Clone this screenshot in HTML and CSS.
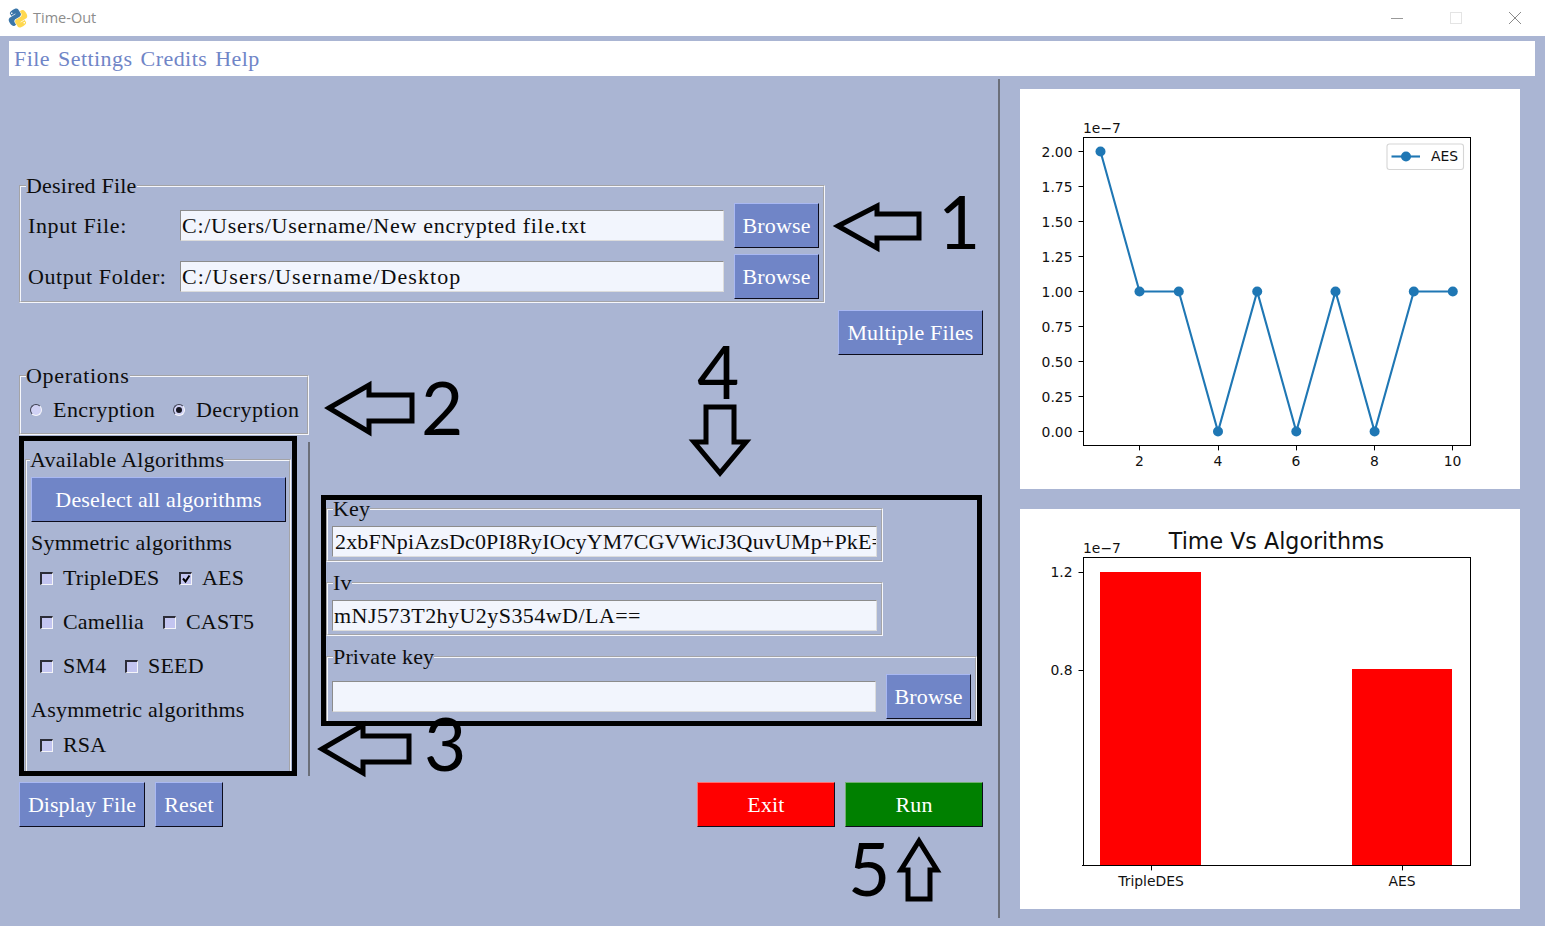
FILE: index.html
```html
<!DOCTYPE html>
<html lang="en">
<head>
<meta charset="utf-8">
<title>Time-Out</title>
<link rel="stylesheet" href="styles.css">
</head>
<body>
<header class="titlebar">
  <svg class="app-icon" viewBox="-8 -8 126 126" aria-hidden="true">
    <g transform="rotate(-32 55 55)">
      <path fill="#3b76a9" d="M54.900 0C26.800 0 28.600 12.200 28.600 12.200v12.600h26.800v3.800H17.900S0 26.600 0 54.900s15.700 27.300 15.700 27.300h9.400V69s-.5-15.700 15.400-15.700h26.600s14.900.2 14.900-14.400V14.600S84.300 0 54.900 0z"/>
      <path fill="#ffd84f" d="M55.100 110c28.100 0 26.300-12.200 26.300-12.200V85.200H54.600v-3.800h37.500S110 83.400 110 55.100s-15.700-27.300-15.700-27.300h-9.400V41s.5 15.700-15.400 15.700H42.900S28 56.500 28 71.100v24.300S25.700 110 55.100 110z"/>
      <circle cx="39" cy="13" r="4.500" fill="#fff"/>
      <circle cx="71" cy="97" r="4.500" fill="#fff"/>
    </g>
  </svg>
  <span class="app-title">Time-Out</span>
  <div class="window-controls">
    <span class="win-min"></span>
    <span class="win-max"></span>
    <svg class="win-close" viewBox="0 0 12 12" aria-hidden="true"><path d="M0 0L12 12M12 0L0 12"/></svg>
  </div>
</header>

<nav class="menubar">
  <span>File</span><span>Settings</span><span>Credits</span><span>Help</span>
</nav>

<main class="workspace">
  <section class="left">
    <fieldset class="frame desired">
      <legend>Desired File</legend>
      <div class="file-row">
        <span class="file-label">Input File:</span>
        <div class="entry entry-file">C:/Users/Username/New encrypted file.txt</div>
        <button class="btn btn-browse">Browse</button>
      </div>
      <div class="file-row">
        <span class="file-label">Output Folder:</span>
        <div class="entry entry-file entry-folder">C:/Users/Username/Desktop</div>
        <button class="btn btn-browse">Browse</button>
      </div>
    </fieldset>

    <button class="btn btn-multiple">Multiple Files</button>

    <div class="lower">
      <div class="col-algos">
        <fieldset class="frame operations">
          <legend>Operations</legend>
          <div class="radio-row">
            <label class="radio-item"><span class="radio"></span>Encryption</label>
            <label class="radio-item"><span class="radio radio-on"></span>Decryption</label>
          </div>
        </fieldset>

        <div class="algo-row">
          <div class="highlight algo-box">
            <fieldset class="frame algos">
              <legend>Available Algorithms</legend>
              <button class="btn btn-deselect">Deselect all algorithms</button>
              <div class="algo-heading">Symmetric algorithms</div>
              <div class="check-row">
                <label class="check-item check-wide"><span class="check"></span>TripleDES</label>
                <label class="check-item"><span class="check check-on"><svg viewBox="0 0 10 10" aria-hidden="true"><path d="M2 4.500L4.500 7.500L8.500 1.500"/></svg></span>AES</label>
              </div>
              <div class="check-row">
                <label class="check-item check-mid"><span class="check"></span>Camellia</label>
                <label class="check-item"><span class="check"></span>CAST5</label>
              </div>
              <div class="check-row">
                <label class="check-item check-narrow"><span class="check"></span>SM4</label>
                <label class="check-item"><span class="check"></span>SEED</label>
              </div>
              <div class="algo-heading algo-heading-asym">Asymmetric algorithms</div>
              <div class="check-row check-row-rsa">
                <label class="check-item"><span class="check"></span>RSA</label>
              </div>
            </fieldset>
          </div>
          <div class="v-sep"></div>
        </div>

        <div class="action-row">
          <button class="btn btn-display">Display File</button>
          <button class="btn btn-reset">Reset</button>
        </div>
      </div>

      <div class="col-keys">
        <div class="highlight key-box">
          <fieldset class="frame key-frame">
            <legend>Key</legend>
            <div class="entry entry-key">2xbFNpiAzsDc0PI8RyIOcyYM7CGVWicJ3QuvUMp+PkE=</div>
          </fieldset>
          <fieldset class="frame key-frame iv-frame">
            <legend>Iv</legend>
            <div class="entry entry-iv">mNJ573T2hyU2yS354wD/LA==</div>
          </fieldset>
          <fieldset class="frame key-frame private-frame">
            <legend>Private key</legend>
            <div class="private-row">
              <div class="entry entry-private"></div>
              <button class="btn btn-browse">Browse</button>
            </div>
          </fieldset>
        </div>
        <div class="run-row">
          <button class="btn btn-run btn-exit">Exit</button>
          <button class="btn btn-run btn-go">Run</button>
        </div>
      </div>
    </div>
  </section>

  <div class="divider"></div>

  <aside class="charts">
    <svg class="chart" viewBox="0 0 500 400" role="img" aria-label="AES timing line chart">
      <rect class="spine" x="63.500" y="48.500" width="387" height="308"/>
      <g class="tick">
        <path d="M58.500 62.500H63.500M58.500 97.500H63.500M58.500 132.500H63.500M58.500 167.500H63.500M58.500 202.500H63.500M58.500 237.500H63.500M58.500 272.500H63.500M58.500 307.500H63.500M58.500 342.500H63.500"/>
        <path d="M119.500 356.500v4.900M198.500 356.500v4.900M276.500 356.500v4.900M354.500 356.500v4.900M432.500 356.500v4.900"/>
      </g>
      <text class="t-end" x="52.500" y="68">2.00</text>
      <text class="t-end" x="52.500" y="103">1.75</text>
      <text class="t-end" x="52.500" y="138">1.50</text>
      <text class="t-end" x="52.500" y="173">1.25</text>
      <text class="t-end" x="52.500" y="208">1.00</text>
      <text class="t-end" x="52.500" y="243">0.75</text>
      <text class="t-end" x="52.500" y="278">0.50</text>
      <text class="t-end" x="52.500" y="313">0.25</text>
      <text class="t-end" x="52.500" y="348">0.00</text>
      <text class="t-mid" x="119.500" y="377">2</text>
      <text class="t-mid" x="198" y="377">4</text>
      <text class="t-mid" x="276" y="377">6</text>
      <text class="t-mid" x="354.500" y="377">8</text>
      <text class="t-mid" x="432.500" y="377">10</text>
      <text x="63" y="44">1e−7</text>
      <polyline class="series" points="80.500,62.500 119.500,202.500 158.800,202.500 198,342.500 237.200,202.500 276.300,342.500 315.500,202.500 354.600,342.500 393.800,202.500 432.800,202.500"/>
      <g class="dot">
        <circle cx="80.500" cy="62.500" r="5"/><circle cx="119.500" cy="202.500" r="5"/><circle cx="158.800" cy="202.500" r="5"/><circle cx="198" cy="342.500" r="5"/><circle cx="237.200" cy="202.500" r="5"/><circle cx="276.300" cy="342.500" r="5"/><circle cx="315.500" cy="202.500" r="5"/><circle cx="354.600" cy="342.500" r="5"/><circle cx="393.800" cy="202.500" r="5"/><circle cx="432.800" cy="202.500" r="5"/>
      </g>
      <rect class="legend-box" x="367" y="55" width="76.500" height="25.500" rx="2.500"/>
      <path class="series" d="M371.500 67.500H400"/>
      <circle class="dot" cx="386" cy="67.500" r="5"/>
      <text x="411" y="72">AES</text>
    </svg>

    <svg class="chart" viewBox="0 0 500 400" role="img" aria-label="Time Vs Algorithms bar chart">
      <rect class="bar" x="80" y="63" width="101" height="293"/>
      <rect class="bar" x="332" y="160" width="100" height="196"/>
      <rect class="spine" x="63.500" y="48.500" width="387" height="308"/>
      <g class="tick">
        <path d="M58.500 63.500H63.500M58.500 161.500H63.500M62 356.500H63.500M131.500 356.500v4.900M382.500 356.500v4.900"/>
      </g>
      <text class="t-end" x="52.500" y="68">1.2</text>
      <text class="t-end" x="52.500" y="166">0.8</text>
      <text class="t-mid" x="131" y="377">TripleDES</text>
      <text class="t-mid" x="382" y="377">AES</text>
      <text x="63" y="44">1e−7</text>
      <text class="chart-title" x="256.500" y="40">Time Vs Algorithms</text>
    </svg>
  </aside>
</main>

<div class="annotations">
  <svg class="arrows" viewBox="0 0 1545 926" aria-hidden="true">
    <path d="M838 226L877 206V214H919V238H877V248Z"/>
    <path d="M329 408L369 385V395H412V421H369V432Z"/>
    <path d="M322 749L363 725V736H409V762H363V773Z"/>
    <path d="M706 407H734V442H746L720 473L694 442H706Z"/>
    <path d="M919 841L937 870H930V899H908V870H901Z"/>
  </svg>
  <span class="digit digit-1">1</span>
  <span class="digit digit-2">2</span>
  <span class="digit digit-3">3</span>
  <span class="digit digit-4">4</span>
  <span class="digit digit-5">5</span>
</div>
</body>
</html>
```

FILE: styles.css
```css
* { box-sizing: border-box; }

html, body { margin: 0; padding: 0; }

body {
  position: relative;
  width: 1545px;
  height: 926px;
  overflow: hidden;
  background: #aab5d3;
  color: #0d0d0d;
  font-family: "Liberation Serif", serif;
  font-size: 22px;
  line-height: 24px;
}

/* Title bar */
.titlebar {
  display: flex;
  align-items: center;
  height: 36px;
  padding-left: 7px;
  background: #fff;
}
.app-icon { width: 22px; height: 22px; flex: none; }
.app-title {
  margin-left: 4px;
  font-family: "Open Sans", sans-serif;
  font-size: 14.500px;
  color: #8c8c8c;
}
.window-controls {
  display: flex;
  align-items: center;
  margin-left: auto;
  padding-right: 24px;
  gap: 47px;
}
.win-min { width: 12px; height: 1px; background: #999; }
.win-max { width: 12px; height: 12px; border: 1px solid #e4e4e4; }
.win-close { width: 12px; height: 12px; }
.win-close path { stroke: #8a8a8a; stroke-width: 1; fill: none; }

/* Menu */
.menubar {
  display: flex;
  gap: 8px;
  height: 35px;
  margin: 5px 10px 0 9px;
  padding: 6px 0 0 5px;
  background: #fff;
  color: #7085c7;
  letter-spacing: 0.45px;
}

/* Layout */
.workspace { display: flex; height: 850px; }
.left {
  display: flex;
  flex-direction: column;
  width: 998px;
  padding: 98px 15px 0 19px;
}
.divider {
  width: 2px;
  margin: 3px 0 8px;
  background: #6b6f7a;
}
.charts {
  display: flex;
  flex-direction: column;
  gap: 20px;
  padding: 13px 0 0 20px;
}
.chart { display: block; width: 500px; height: 400px; background: #fff; }

/* Frames */
.frame {
  min-width: 0;
  margin: 0;
  padding: 0;
  border: 2px groove #f6f7fb;
}
.frame legend {
  padding: 0;
  line-height: 24px;
  letter-spacing: 0.15px;
}

.desired { width: 806px; height: 129px; padding: 5px 4px 0 7px; }
.desired legend { margin-left: -2px; letter-spacing: 0.2px; }
.file-row { display: flex; align-items: center; height: 45px; margin-bottom: 6px; }
.file-label { width: 152px; flex: none; letter-spacing: 0.6px; white-space: nowrap; }
.entry {
  width: 545px;
  height: 31px;
  flex: none;
  padding-left: 1px;
  overflow: hidden;
  white-space: nowrap;
  background: #f2f5fd;
  border: 1px solid;
  border-color: #8c8c8c #dcdcdc #dcdcdc #8c8c8c;
  line-height: 29px;
  letter-spacing: 0.15px;
}
.entry-file { width: 544px; margin-right: 10px; letter-spacing: 0.72px; }
.entry-folder { letter-spacing: 1.11px; }
.entry-key { padding-left: 2px; }
.entry-iv { letter-spacing: 0.45px; }
.entry-private { width: 544px; margin-right: 10px; }

/* Buttons */
.btn {
  display: block;
  flex: none;
  height: 45px;
  padding: 0;
  font: inherit;
  letter-spacing: 0.15px;
  color: #fff;
  background: #7085c7;
  border: 1px solid;
  border-color: #a9b8f2 #0c0c1c #0c0c1c #a9b8f2;
}
.btn-browse { width: 85px; }
.btn-multiple { align-self: flex-end; width: 145px; margin-top: 7px; }
.btn-deselect { width: 255px; }
.btn-display { width: 126px; letter-spacing: 0; }
.btn-reset { width: 68px; }
.btn-run { width: 138px; }
.btn-exit { background: #ff0000; border-color: #ff7070 #0c0c1c #0c0c1c #ff7070; }
.btn-go { background: #008000; border-color: #70b070 #0c0c1c #0c0c1c #70b070; }

/* Lower area */
.lower { display: flex; gap: 11px; }
.col-algos { width: 291px; flex: none; }
.col-keys { width: 662px; flex: none; margin-top: 140px; }

.operations { width: 290px; height: 71px; margin-top: 9px; padding: 10px 0 0 9px; }
.operations legend { margin-left: -4px; letter-spacing: 0.7px; }
.radio-row { display: flex; }
.radio-item { display: flex; align-items: center; flex: none; width: 143px; letter-spacing: 0.45px; }
.radio {
  position: relative;
  width: 12px;
  height: 12px;
  flex: none;
  margin-right: 11px;
  border-radius: 50%;
  background: #d0d1f4;
  border: 1px solid;
  border-color: #3d3f50 #f6f6fa #f6f6fa #3d3f50;
}
.radio-on::after {
  content: "";
  position: absolute;
  top: 2px;
  left: 2px;
  width: 6px;
  height: 6px;
  border-radius: 50%;
  background: #15151f;
}

.highlight { border: 5px solid #000; }
.algo-row { display: flex; margin-top: 1px; }
.algo-box { width: 278px; height: 340px; flex: none; }
.v-sep { width: 2px; margin: 6px 0 0 11px; background: #6b6f7a; }
.algos { height: 323px; margin: 7px 0 0 1px; width: 266px; padding: 5px 0 0 4px; border-bottom: 0; }
.algos legend { margin-left: -1px; letter-spacing: 0.3px; }
.algo-heading { margin-top: 9px; letter-spacing: 0.25px; }
.check-row { display: flex; height: 24px; margin: 11px 0 20px 9px; }
.algo-heading-asym { margin-top: 0; }
.check-row-rsa { margin-top: 11px; margin-bottom: 0; }
.check-item { display: flex; align-items: center; letter-spacing: 0.2px; }
.check-wide { width: 139px; }
.check-mid { width: 123px; }
.check-narrow { width: 85px; }
.check {
  width: 13px;
  height: 13px;
  flex: none;
  margin-right: 10px;
  background: #c3c5f0;
  border-style: solid;
  border-width: 2px 1px 1px 2px;
  border-color: #2c2d38 #f4f4f8 #f4f4f8 #2c2d38;
}
.check svg { display: block; width: 10px; height: 10px; }
.check svg path { fill: none; stroke: #000; stroke-width: 2; }

.action-row { display: flex; gap: 10px; margin-top: 6px; }

.key-box { width: 661px; height: 231px; }
.key-frame { width: 557px; height: 62px; padding: 8px 4px 0 4px; }
.key-frame legend { line-height: 18px; margin-left: 1px; }
.iv-frame { margin-top: 12px; }
.private-frame { width: 651px; height: 73px; margin-top: 12px; border-bottom: 0; }
.private-row { display: flex; align-items: center; }

.run-row { display: flex; justify-content: flex-end; gap: 10px; margin-top: 56px; }

/* Chart text */
.chart text {
  font-family: "DejaVu Sans", sans-serif;
  font-size: 13.900px;
  fill: #111;
}
.chart .t-end { text-anchor: end; }
.chart .t-mid { text-anchor: middle; }
.chart .chart-title { font-size: 22.200px; text-anchor: middle; }
.spine { fill: none; stroke: #000; stroke-width: 1; }
.tick path { fill: none; stroke: #000; stroke-width: 1; }
.series { fill: none; stroke: #1f77b4; stroke-width: 2.100; }
.dot { fill: #1f77b4; }
.legend-box { fill: #fff; stroke: #d6d6d6; stroke-width: 1.100; }
.bar { fill: #ff0000; }

/* Hand-drawn annotations lying over the window */
.annotations { position: absolute; top: 0; left: 0; width: 1545px; height: 926px; pointer-events: none; }
.arrows { position: absolute; top: 0; left: 0; width: 1545px; height: 926px; }
.arrows path { fill: none; stroke: #000; stroke-width: 5; stroke-linejoin: miter; stroke-miterlimit: 6; }
.digit {
  position: absolute;
  font-family: "Lato", sans-serif;
  font-size: 73px;
  line-height: 73px;
  color: #000;
}
.digit-1 { left: 938px; top: 185px; }
.digit-2 { left: 421px; top: 371px; }
.digit-3 { left: 424px; top: 707px; }
.digit-4 { left: 697px; top: 335px; }
.digit-5 { left: 848px; top: 832px; }
```
